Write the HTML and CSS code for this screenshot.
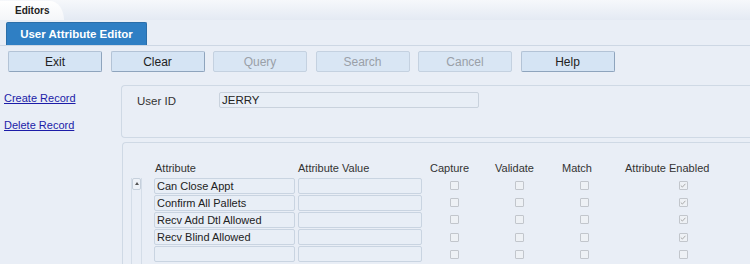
FILE: index.html
```html
<!DOCTYPE html>
<html lang="en">
<head>
  <meta charset="UTF-8">
  <title>User Attribute Editor</title>
  <link rel="stylesheet" href="styles.css">
</head>
<body>
  <div class="topbar">
    <div class="top-tab">Editors</div>
  </div>

  <div class="title-row">
    <div class="title-tab">User Attribute Editor</div>
  </div>

  <div class="toolbar">
    <button class="tool-btn">Exit</button>
    <button class="tool-btn">Clear</button>
    <button class="tool-btn" disabled>Query</button>
    <button class="tool-btn" disabled>Search</button>
    <button class="tool-btn" disabled>Cancel</button>
    <button class="tool-btn">Help</button>
  </div>

  <div class="main">
    <div class="sidebar">
      <a href="#" class="side-link">Create Record</a>
      <a href="#" class="side-link">Delete Record</a>
    </div>

    <div class="content">
      <div class="panel header-panel">
        <label class="field-label">User ID</label>
        <div class="field-input">JERRY</div>
      </div>

      <div class="panel grid-panel">
        <div class="scrollbar">
          <div class="scroll-up"></div>
        </div>
        <div class="grid">
          <div class="grid-head">
            <span class="col-attr">Attribute</span>
            <span class="col-value">Attribute Value</span>
            <span class="col-check">Capture</span>
            <span class="col-check">Validate</span>
            <span class="col-check col-match">Match</span>
            <span class="col-enabled">Attribute Enabled</span>
          </div>
          <div id="rows"></div>
        </div>
      </div>
    </div>
  </div>

  <script>
    const rows = [
      { name: 'Can Close Appt', enabled: true },
      { name: 'Confirm All Pallets', enabled: true },
      { name: 'Recv Add Dtl Allowed', enabled: true },
      { name: 'Recv Blind Allowed', enabled: true },
      { name: '', enabled: false }
    ];

    const box = (checked) =>
      `<span class="cb">${checked ? '<svg viewBox="0 0 9 9" width="9" height="9"><path d="M2 4.5 L3.8 6.3 L7.2 2.6" fill="none" stroke="#a8a8a8" stroke-width="1.1"/></svg>' : ''}</span>`;

    document.getElementById('rows').innerHTML = rows.map(r => `
      <div class="grid-row">
        <div class="cell col-attr">${r.name}</div>
        <div class="cell col-value"></div>
        <div class="col-check">${box(false)}</div>
        <div class="col-check">${box(false)}</div>
        <div class="col-check">${box(false)}</div>
        <div class="col-enabled">${box(r.enabled)}</div>
      </div>`).join('');
  </script>
</body>
</html>
```

FILE: styles.css
```css
* {
  margin: 0;
  padding: 0;
  box-sizing: border-box;
}

body {
  width: 750px;
  height: 264px;
  overflow: hidden;
  font-family: "Liberation Sans", Arial, sans-serif;
  font-size: 11px;
  color: #333;
  background: #e9eef6;
}

.topbar {
  height: 20px;
  background: linear-gradient(180deg, #f6f8fb 0%, #e4eaf3 100%);
  display: flex;
  align-items: flex-end;
}

.top-tab {
  width: 64px;
  height: 19px;
  padding: 4px 0 0 15px;
  background: linear-gradient(180deg, #ffffff 0%, #f4f6f9 100%);
  border-top-right-radius: 14px 19px;
  font-size: 10px;
  font-weight: bold;
  color: #222;
}

.title-row {
  height: 26px;
  padding: 2px 0 0 6px;
  border-bottom: 1px solid #cdd7e4;
}

.title-tab {
  width: 141px;
  height: 23px;
  background: #2f7fc4;
  border: 1px solid #2a6ea9;
  border-bottom: none;
  border-radius: 2px 2px 0 0;
  color: #fff;
  font-weight: bold;
  font-size: 11.5px;
  line-height: 22px;
  text-align: center;
}

.toolbar {
  display: flex;
  gap: 8.5px;
  padding: 5px 8px 0;
  height: 39px;
}

.tool-btn {
  width: 94px;
  height: 21px;
  background: #d5e4f4;
  border: 1px solid #b3c3d6;
  border-right-color: #8ea4bd;
  border-bottom-color: #8ea4bd;
  border-radius: 2px;
  font-family: inherit;
  font-size: 12px;
  color: #222;
}

.tool-btn:disabled {
  color: #9aa0a8;
  background: #d9e6f4;
  border-color: #c4d1e0;
}

.main {
  display: flex;
}

.sidebar {
  width: 121px;
  display: flex;
  flex-direction: column;
  align-items: flex-start;
  gap: 15px;
  padding: 7px 0 0 4px;
}

.side-link {
  color: #1c1ca8;
  font-size: 11px;
  text-decoration: underline;
}

.content {
  flex: 1;
}

.panel {
  border: 1px solid #cfd9e5;
  border-right: none;
  border-radius: 4px 0 0 4px;
}

.header-panel {
  height: 53px;
  display: flex;
  align-items: flex-start;
  padding: 6px 0 0 15px;
}

.field-label {
  width: 82px;
  padding-top: 3px;
  font-size: 11.5px;
}

.field-input {
  width: 260px;
  height: 16px;
  background: #e8eef6;
  border: 1px solid #c9d2dd;
  border-radius: 2px;
  padding: 0 0 0 2px;
  line-height: 14px;
  font-size: 11.5px;
  color: #222;
}

.grid-panel {
  margin-top: 4px;
  margin-left: 1px;
  height: 130px;
  display: flex;
  padding: 16px 0 0 8px;
}

.scrollbar {
  width: 11px;
  margin-top: 19px;
  border-left: 1px solid #d4dde8;
  border-right: 1px solid #d4dde8;
}

.scroll-up {
  height: 12px;
  border: 1px solid #c6d0dc;
  border-radius: 2px;
  background: #eef2f8;
  position: relative;
}

.scroll-up::after {
  content: "";
  position: absolute;
  left: 2px;
  top: 3px;
  border-left: 2.5px solid transparent;
  border-right: 2.5px solid transparent;
  border-bottom: 3px solid #555;
}

.grid {
  margin-left: 12px;
}

.grid-head {
  display: flex;
  height: 18px;
  align-items: center;
}

.grid-head .col-attr {
  width: 144px;
  padding-left: 1px;
}

.grid-head .col-value {
  width: 124px;
}

.grid-head .col-check {
  width: 65px;
  padding-left: 8px;
}

.grid-head .col-match {
  padding-left: 10px;
}

.grid-head .col-enabled {
  padding-left: 8px;
}

.grid-row {
  display: flex;
  align-items: center;
  height: 17.2px;
}

.cell {
  height: 16px;
  background: #e8eef6;
  border: 1px solid #c9d4e1;
  border-radius: 2px;
  padding-left: 2px;
  line-height: 14px;
  color: #222;
}

.cell.col-attr {
  width: 141px;
  margin-right: 3px;
}

.cell.col-value {
  width: 124px;
}

.grid-row .col-check,
.grid-row .col-enabled {
  display: flex;
  justify-content: center;
}

.grid-row .col-check {
  width: 65px;
}

.grid-row .col-enabled {
  width: 133px;
}

.cb {
  width: 9px;
  height: 9px;
  border: 1px solid #c2c6cc;
  border-radius: 1px;
  background: #eef1f5;
  display: flex;
}

.cb svg {
  margin: -1px 0 0 -1px;
}
```
